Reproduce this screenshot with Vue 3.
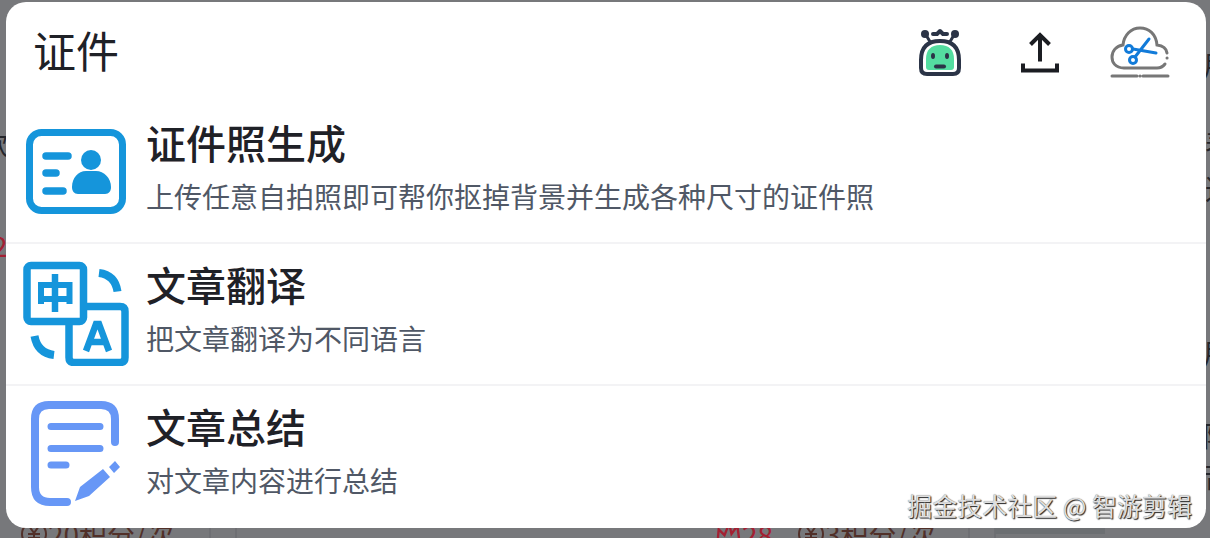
<script setup>
import { ref } from 'vue'

const query = ref('证件')
const rows = [
  { id: 'card', title: '证件照生成', desc: '上传任意自拍照即可帮你抠掉背景并生成各种尺寸的证件照' },
  { id: 'translate', title: '文章翻译', desc: '把文章翻译为不同语言' },
  { id: 'summary', title: '文章总结', desc: '对文章内容进行总结' },
]
</script>

<template>
  <div class="page">
    <div class="backdrop" aria-hidden="true">
      <span class="edge left-a">款</span>
      <span class="edge left-b">2</span>
      <span class="edge right-a">用</span>
      <span class="edge right-b">表</span>
      <span class="edge right-c">这</span>
      <span class="edge right-d">用</span>
      <span class="edge right-e">随</span>
      <span class="edge right-f">音</span>
      <span class="price first"><svg class="coin" viewBox="0 0 28 28"><circle cx="14" cy="14" r="12" /><path d="M9 6l5 7 5-7M8 14h12M8 18h12M14 13v10" /></svg>20积分/次</span>
      <span class="price heat"><svg class="flame" viewBox="0 0 24 24"><path d="M3 20l1-12 5 5 4-10 2 9 5-7 2 15" /></svg>28</span>
      <span class="price second"><svg class="coin" viewBox="0 0 28 28"><circle cx="14" cy="14" r="12" /><path d="M9 6l5 7 5-7M8 14h12M8 18h12M14 13v10" /></svg>3积分/次</span>
      <i class="gutter"></i>
      <i class="gutter far"></i>
      <i class="bar"></i>
    </div>

    <main class="panel">
      <header class="head">
        <input v-model="query" class="search" type="text" aria-label="搜索" />
        <div class="actions">
          <button type="button" aria-label="助手">
            <svg viewBox="0 0 60 60" fill="none">
              <path d="M16 13l6 10M44 13l-6 10" stroke="#2b3447" stroke-width="3" />
              <circle cx="15" cy="12" r="4" fill="#2b3447" />
              <circle cx="45" cy="12" r="4" fill="#2b3447" />
              <path d="M23 12h4l3-3 3 3h4" stroke="#2b3447" stroke-width="4" stroke-linecap="round" stroke-linejoin="round" />
              <path d="M11 38C11 25 18 19 30 19s19 6 19 19v8c0 4-2 6-6 6H17c-4 0-6-2-6-6z" fill="#fff" stroke="#2b3447" stroke-width="4" />
              <path d="M16 37c0-9 5-14 14-14s14 5 14 14v8c0 2-1 3-3 3H19c-2 0-3-1-3-3z" fill="#54dda0" />
              <ellipse cx="23" cy="34" rx="2" ry="3" fill="#2b3447" />
              <ellipse cx="37" cy="34" rx="2" ry="3" fill="#2b3447" />
              <path d="M26 44.500h8" stroke="#2b3447" stroke-width="4" stroke-linecap="round" />
            </svg>
          </button>
          <button type="button" aria-label="上传">
            <svg viewBox="0 0 60 60" fill="none" stroke="#1b1d22" stroke-width="4">
              <path d="M30 39.500V14M20.500 22.500L30 13l9.500 9.500M13 41.500v7h34v-7" />
            </svg>
          </button>
          <button type="button" aria-label="云剪辑">
            <svg viewBox="0 0 60 60" fill="none" stroke-linecap="round">
              <path d="M55 42q-3 4-8 4H14C5 46 2 40 2 35c0-6 4-11 11-12C14 13 21 6 30 6s16 6 17 17q9 1 10 8" stroke="#777" stroke-width="3" />
              <path d="M57 36h0.100M30 54h0.100M2 54h25M33 54h25" stroke="#777" stroke-width="3" />
              <g stroke="#127bd9" stroke-width="3">
                <circle cx="19" cy="27" r="3.500" />
                <circle cx="23" cy="38" r="3.500" />
                <path d="M23 27l23 4M25 35l14-18" />
              </g>
            </svg>
          </button>
        </div>
      </header>

      <ul class="results">
        <li v-for="row in rows" :key="row.id">
          <button type="button" class="row">
            <svg v-if="row.id === 'card'" class="icon" viewBox="0 0 112 112" fill="none">
              <rect x="9.500" y="20.500" width="93" height="78" rx="12" stroke="#1595db" stroke-width="7" />
              <path d="M26 44h22M26 61h10M26 79h17" stroke="#1595db" stroke-width="7.500" stroke-linecap="round" />
              <circle cx="71" cy="48" r="10" fill="#1595db" />
              <path d="M52 75c0-9 6-16 14-16h10c8 0 15 7 15 16 0 4-2 7-6 7H58c-4 0-6-3-6-7z" fill="#1595db" />
            </svg>
            <svg v-else-if="row.id === 'translate'" class="icon" viewBox="0 0 112 112" fill="none" stroke="#1595db">
              <rect x="7" y="11.500" width="56.500" height="56" rx="4" stroke-width="7.500" />
              <path d="M67 52.500h33q5 0 5 5v46q0 5-5 5H54q-5 0-5-5V71" stroke-width="7.500" />
              <path d="M21 50V31h28.500v19M21 45h28.500" stroke-width="6" />
              <path d="M35 20v38" stroke-width="6.500" />
              <path d="M66 97l10-27h3l10 27M69 88h17" stroke-width="6.500" />
              <path d="M79 19q16 2 18.500 18.500M14.500 82q3 17 19.500 19" stroke-width="8" />
            </svg>
            <svg v-else class="icon" viewBox="0 0 112 112" fill="none" stroke="#6797f6">
              <path d="M95 46V23q0-14-14-14H29q-14 0-14 14v68q0 15 15 15h17" stroke-width="8" stroke-linecap="round" />
              <path d="M31 30.500h49M31 52.500h49M31 69h15" stroke-width="7" stroke-linecap="round" />
              <path d="M55 105l5-14 23-18 7 8-21 19zM89 71l6-6 5 6-6 6z" fill="#6797f6" stroke="none" />
            </svg>
            <span class="copy">
              <span class="title">{{ row.title }}</span>
              <span class="desc">{{ row.desc }}</span>
            </span>
          </button>
        </li>
      </ul>
    </main>
    <p class="mark">掘金技术社区 @ 智游剪辑</p>
  </div>
</template>

<style>
body {
  margin: 0;
  background: #77787b;
}
</style>

<style scoped>
* {
  box-sizing: border-box;
}
.page {
  position: relative;
  min-height: 100vh;
  padding: 2px 4px 10px 6px;
  overflow: hidden;
  background: #77787b;
  color: #1f2127;
  font-family: "Noto Sans CJK SC", sans-serif;
}
.backdrop {
  position: absolute;
  inset: 0;
  overflow: hidden;
}
.edge {
  position: absolute;
  font-size: 28px;
  line-height: 40px;
  color: #25262b;
}
.left-a { left: -20px; top: 123px; }
.left-b { left: -8px; top: 225px; color: #a32032; }
.right-a { left: 1203px; top: 44px; }
.right-b { left: 1205px; top: 123px; }
.right-c { left: 1205px; top: 168px; }
.right-d { left: 1203px; top: 332px; }
.right-e { left: 1203px; top: 415px; }
.right-f { left: 1203px; top: 456px; }
.price {
  position: absolute;
  top: 514px;
  display: flex;
  align-items: center;
  font-size: 28px;
  line-height: 40px;
  color: #513029;
  white-space: nowrap;
}
.first { left: 20px; }
.heat { left: 714px; color: #a32032; }
.second { left: 797px; }
.coin,
.flame {
  width: 28px;
  height: 28px;
  fill: none;
  stroke: currentColor;
  stroke-width: 2;
}
.gutter {
  position: absolute;
  left: 209px;
  bottom: 0;
  width: 28px;
  height: 12px;
  border: solid #6e6f73;
  border-width: 0 2px;
}
.far { left: 968px; }
.bar {
  position: absolute;
  left: 995px;
  bottom: 4px;
  width: 110px;
  height: 8px;
  background: #6c6f72;
}
.panel {
  position: relative;
  overflow: hidden;
  border-radius: 20px;
  background: #fff;
}
.head {
  display: flex;
  align-items: center;
  justify-content: space-between;
  height: 100px;
  padding: 0 36px 0 27px;
}
.search {
  flex: 1;
  min-width: 0;
  padding: 0 0 6px;
  border: 0;
  outline: 0;
  background: transparent;
  color: inherit;
  font: 400 43px/60px "Noto Sans CJK SC", sans-serif;
}
.actions {
  display: flex;
  gap: 40px;
}
button {
  padding: 0;
  border: 0;
  background: none;
  color: inherit;
  font: inherit;
  text-align: left;
  cursor: pointer;
}
.actions svg {
  display: block;
  width: 60px;
  height: 60px;
}
.results {
  margin: 0;
  padding: 0;
  list-style: none;
}
.row {
  display: flex;
  align-items: center;
  gap: 14px;
  width: 100%;
  height: 142px;
  padding: 0 14px 8px;
  border-bottom: 2px solid #f3f3f5;
}
li:last-child .row {
  border-bottom-color: transparent;
}
.icon {
  flex: none;
  width: 112px;
  height: 112px;
}
.copy {
  display: flex;
  flex-direction: column;
  gap: 6px;
  padding-bottom: 6px;
}
.title {
  font-size: 40px;
  font-weight: 500;
  line-height: 56px;
}
.desc {
  color: #505866;
  font-size: 28px;
  line-height: 40px;
}
.mark {
  position: absolute;
  right: 18px;
  bottom: 15px;
  margin: 0;
  color: #dedede;
  font-size: 25px;
  line-height: 36px;
  text-shadow: 1px 1px 1px #222, 0 0 1px #777;
}
</style>
